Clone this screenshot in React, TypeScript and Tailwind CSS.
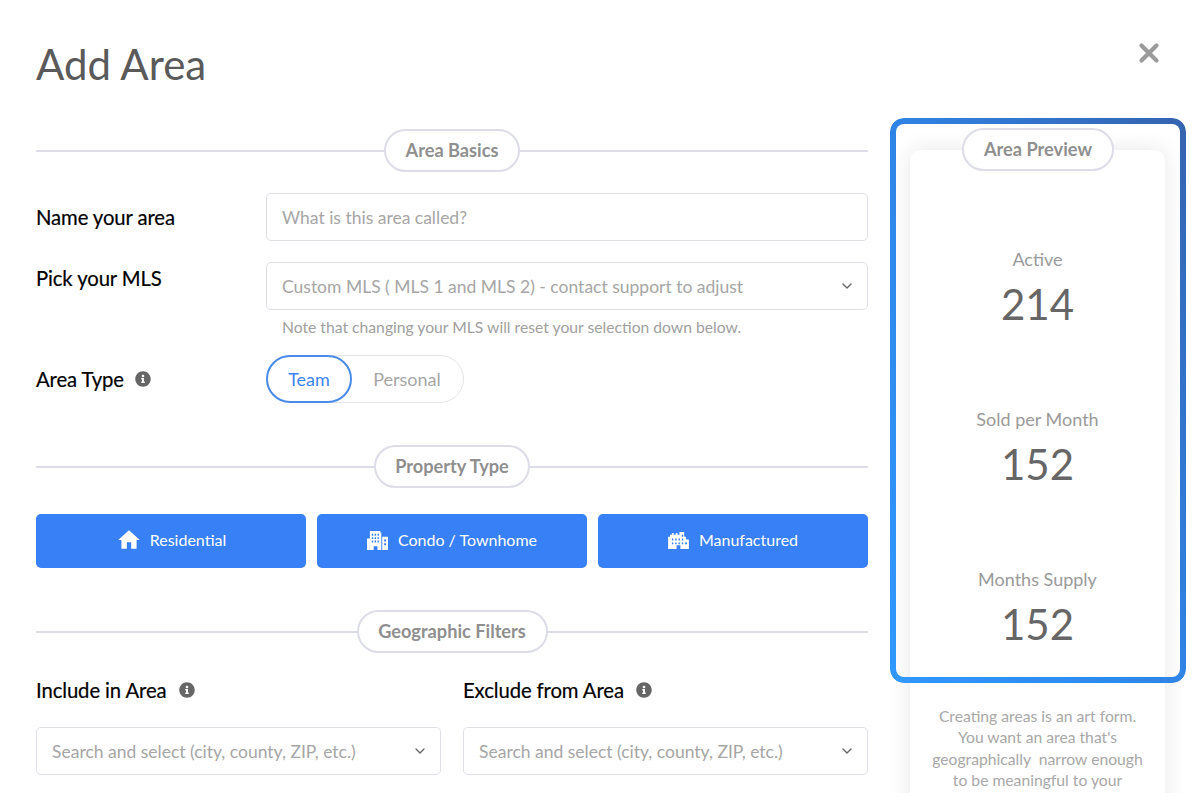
import React from "react";
import { FaInfoCircle } from "react-icons/fa";
import { MdHome } from "react-icons/md";
import { ChevronDown, X } from "lucide-react";

function Divider({ label, pillW, className = "" }: { label: string; pillW: string; className?: string }) {
  return (
    <div className={`flex items-center h-[43px] ${className}`}>
      <div className="flex-1 h-[2px] bg-[#dcdde6]" />
      <Pill label={label} className={pillW} />
      <div className="flex-1 h-[2px] bg-[#dcdde6]" />
    </div>
  );
}

function Pill({ label, className = "" }: { label: string; className?: string }) {
  return (
    <div className={`h-[43px] rounded-full border-2 border-[#dcdde6] bg-white flex items-center justify-center text-[18.200px] font-bold text-[#8f8f8f] ${className}`}>
      {label}
    </div>
  );
}

function Select({ text, className = "" }: { text: string; className?: string }) {
  return (
    <div className={`h-[48px] rounded-[5px] border border-[#dfe0e6] bg-white flex items-center justify-between pl-[15px] pr-[12px] text-[17.500px] text-[#a6a6a6] ${className}`}>
      <span className="whitespace-nowrap pt-[2px]">{text}</span>
      <ChevronDown size={16} strokeWidth={2} className="text-[#666666]" />
    </div>
  );
}

function Info() {
  return <FaInfoCircle size={16} className="text-[#666666]" />;
}

function Condo() {
  return (
    <svg viewBox="0 0 22 20" width="21" height="19" fill="#ffffff">
      <path fillRule="evenodd" d="M3 0h11v1.5h1V20h-4v-4H7v4H3v-8H0V8h3zM5 3v2h1.5V3zM8 3v2h1.5V3zM11 3v2h1.5V3zM5 6.5v2h1.5v-2zM8 6.5v2h1.5v-2zM11 6.5v2h1.5v-2zM5 10v2h1.5v-2zM8 10v2h1.5v-2zM11 10v2h1.5v-2z" />
      <path fillRule="evenodd" d="M16 6h6v14h-6zM18 9v2h2V9zM18 13v2h2v-2z" />
      <path d="M0 9h3v11H0z" />
    </svg>
  );
}

function Manufactured() {
  return (
    <svg viewBox="0 0 22 18" width="21" height="17" fill="#ffffff">
      <path fillRule="evenodd" d="M2 3h2V1h2v2h2V1h2v2h2V0h5v5h2v3h3v10H13v-4H9v4H0V5h2zM4 7v2h1.500V7zM7.500 7v2H9V7zM11 7v2h1.500V7zM14.500 3v2H16V3zM14.500 7v2H16V7zM4 11v2h1.500v-2zM7.500 11v2H9v-2zM11 11v2h1.500v-2zM14.500 11v2H16v-2zM18 11v2h2v-2z" />
    </svg>
  );
}

function TypeButton({ icon, label, gap = "gap-[10px]" }: { icon: React.ReactNode; label: string; gap?: string }) {
  return (
    <div className={`flex-1 h-[54px] rounded-[5px] bg-[#3880f5] flex items-center justify-center text-white text-[16px] pb-[2px] ${gap}`}>
      {icon}
      <span>{label}</span>
    </div>
  );
}

function Stat({ label, value }: { label: string; value: string }) {
  return (
    <div className="flex flex-col items-center">
      <div className="h-[28px] leading-[28px] text-[18px] text-[#9a9a9a]">{label}</div>
      <div className="h-[56px] leading-[56px] text-[42px] text-[#666666] pt-[3px]">{value}</div>
    </div>
  );
}

const labelText = "text-[20.300px] text-black [-webkit-text-stroke:0.2px_#000] tracking-[-0.1px]";

export default function App() {
  return (
    <div className="w-[1200px] h-[793px] overflow-hidden bg-white pl-[36px] font-['Lato','Inter',sans-serif]">
      <div className="flex justify-between h-[118px] pr-[36px]">
        <h1 className="text-[42px] leading-[48px] mt-[40px] text-[#5a5a5a]">Add Area</h1>
        <X size={30} strokeWidth={3.4} className="text-[#9b9b9b] mt-[38px]" />
      </div>

      <div className="flex gap-[22px] items-start">
        <div className="w-[832px] pt-[11px] shrink-0">
          <Divider label="Area Basics" pillW="w-[136px]" />

          <div className="flex items-center mt-[21px]">
            <div className={`w-[230px] ${labelText}`}>Name your area</div>
            <div className="flex-1 h-[48px] rounded-[5px] border border-[#dfe0e6] flex items-center pl-[15px] pt-[2px] text-[17.500px] text-[#a6a6a6]">
              What is this area called?
            </div>
          </div>

          <div className="flex items-start mt-[21px]">
            <div className={`w-[230px] leading-[32px] ${labelText}`}>Pick your MLS</div>
            <div className="flex-1">
              <Select text="Custom MLS ( MLS 1 and MLS 2) - contact support to adjust" />
              <div className="pl-[16px] mt-[7px] text-[15.700px] leading-[20px] text-[#a0a0a0]">
                Note that changing your MLS will reset your selection down below.
              </div>
            </div>
          </div>

          <div className="flex items-center mt-[18px]">
            <div className={`w-[230px] flex items-center gap-[11px] ${labelText}`}>
              Area Type <Info />
            </div>
            <div className="w-[198px] h-[48px] rounded-full border border-[#e3e4e8] flex items-center text-[18px]">
              <div className="w-[86px] h-[48px] ml-[-1px] rounded-full border-2 border-[#4a8be8] flex items-center justify-center text-[#3d84ea]">
                Team
              </div>
              <div className="flex-1 text-center pr-[1px] text-[#a6a6a6]">Personal</div>
            </div>
          </div>

          <Divider label="Property Type" pillW="w-[156px]" className="mt-[42px]" />

          <div className="flex gap-[11px] mt-[26px]">
            <TypeButton icon={<MdHome size={26} />} label="Residential" gap="gap-[8px]" />
            <TypeButton icon={<Condo />} label="Condo / Townhome" />
            <TypeButton icon={<Manufactured />} label="Manufactured" />
          </div>

          <Divider label="Geographic Filters" pillW="w-[191px]" className="mt-[42px]" />

          <div className="flex gap-[22px] mt-[22px]">
            <div className="flex-1">
              <div className={`flex items-center gap-[12px] h-[30px] ${labelText}`}>
                Include in Area <Info />
              </div>
              <Select text="Search and select (city, county, ZIP, etc.)" className="mt-[22px]" />
            </div>
            <div className="flex-1">
              <div className={`flex items-center gap-[12px] h-[30px] ${labelText}`}>
                Exclude from Area <Info />
              </div>
              <Select text="Search and select (city, county, ZIP, etc.)" className="mt-[22px]" />
            </div>
          </div>
        </div>

        <div className="relative w-[296px] shrink-0">
          <div className="ml-[20px] mt-[32px] w-[255px] h-[700px] rounded-[10px] bg-white shadow-[0_0_22px_rgba(0,0,0,0.10)] pt-[95px]">
            <div className="flex flex-col gap-[76px]">
              <Stat label="Active" value="214" />
              <Stat label="Sold per Month" value="152" />
              <Stat label="Months Supply" value="152" />
            </div>
            <p className="mt-[57px] text-center text-[15.700px] leading-[21.300px] text-[#a8a8a8] whitespace-pre">
              {"Creating areas is an art form.\nYou want an area that's\ngeographically  narrow enough\nto be meaningful to your"}
            </p>
          </div>
          <div className="absolute left-0 top-0 w-[296px] h-[565px] rounded-[14px] p-[6px] bg-[linear-gradient(to_top_right,#3098ff_0%,#2f84e6_50%,#3563ae_100%)] [mask-image:linear-gradient(#000,#000),linear-gradient(#000,#000)] [mask-clip:content-box,border-box] [mask-composite:exclude]" />
          <div className="absolute left-[72px] top-[10px] w-[152px]">
            <Pill label="Area Preview" />
          </div>
        </div>
      </div>
    </div>
  );
}
